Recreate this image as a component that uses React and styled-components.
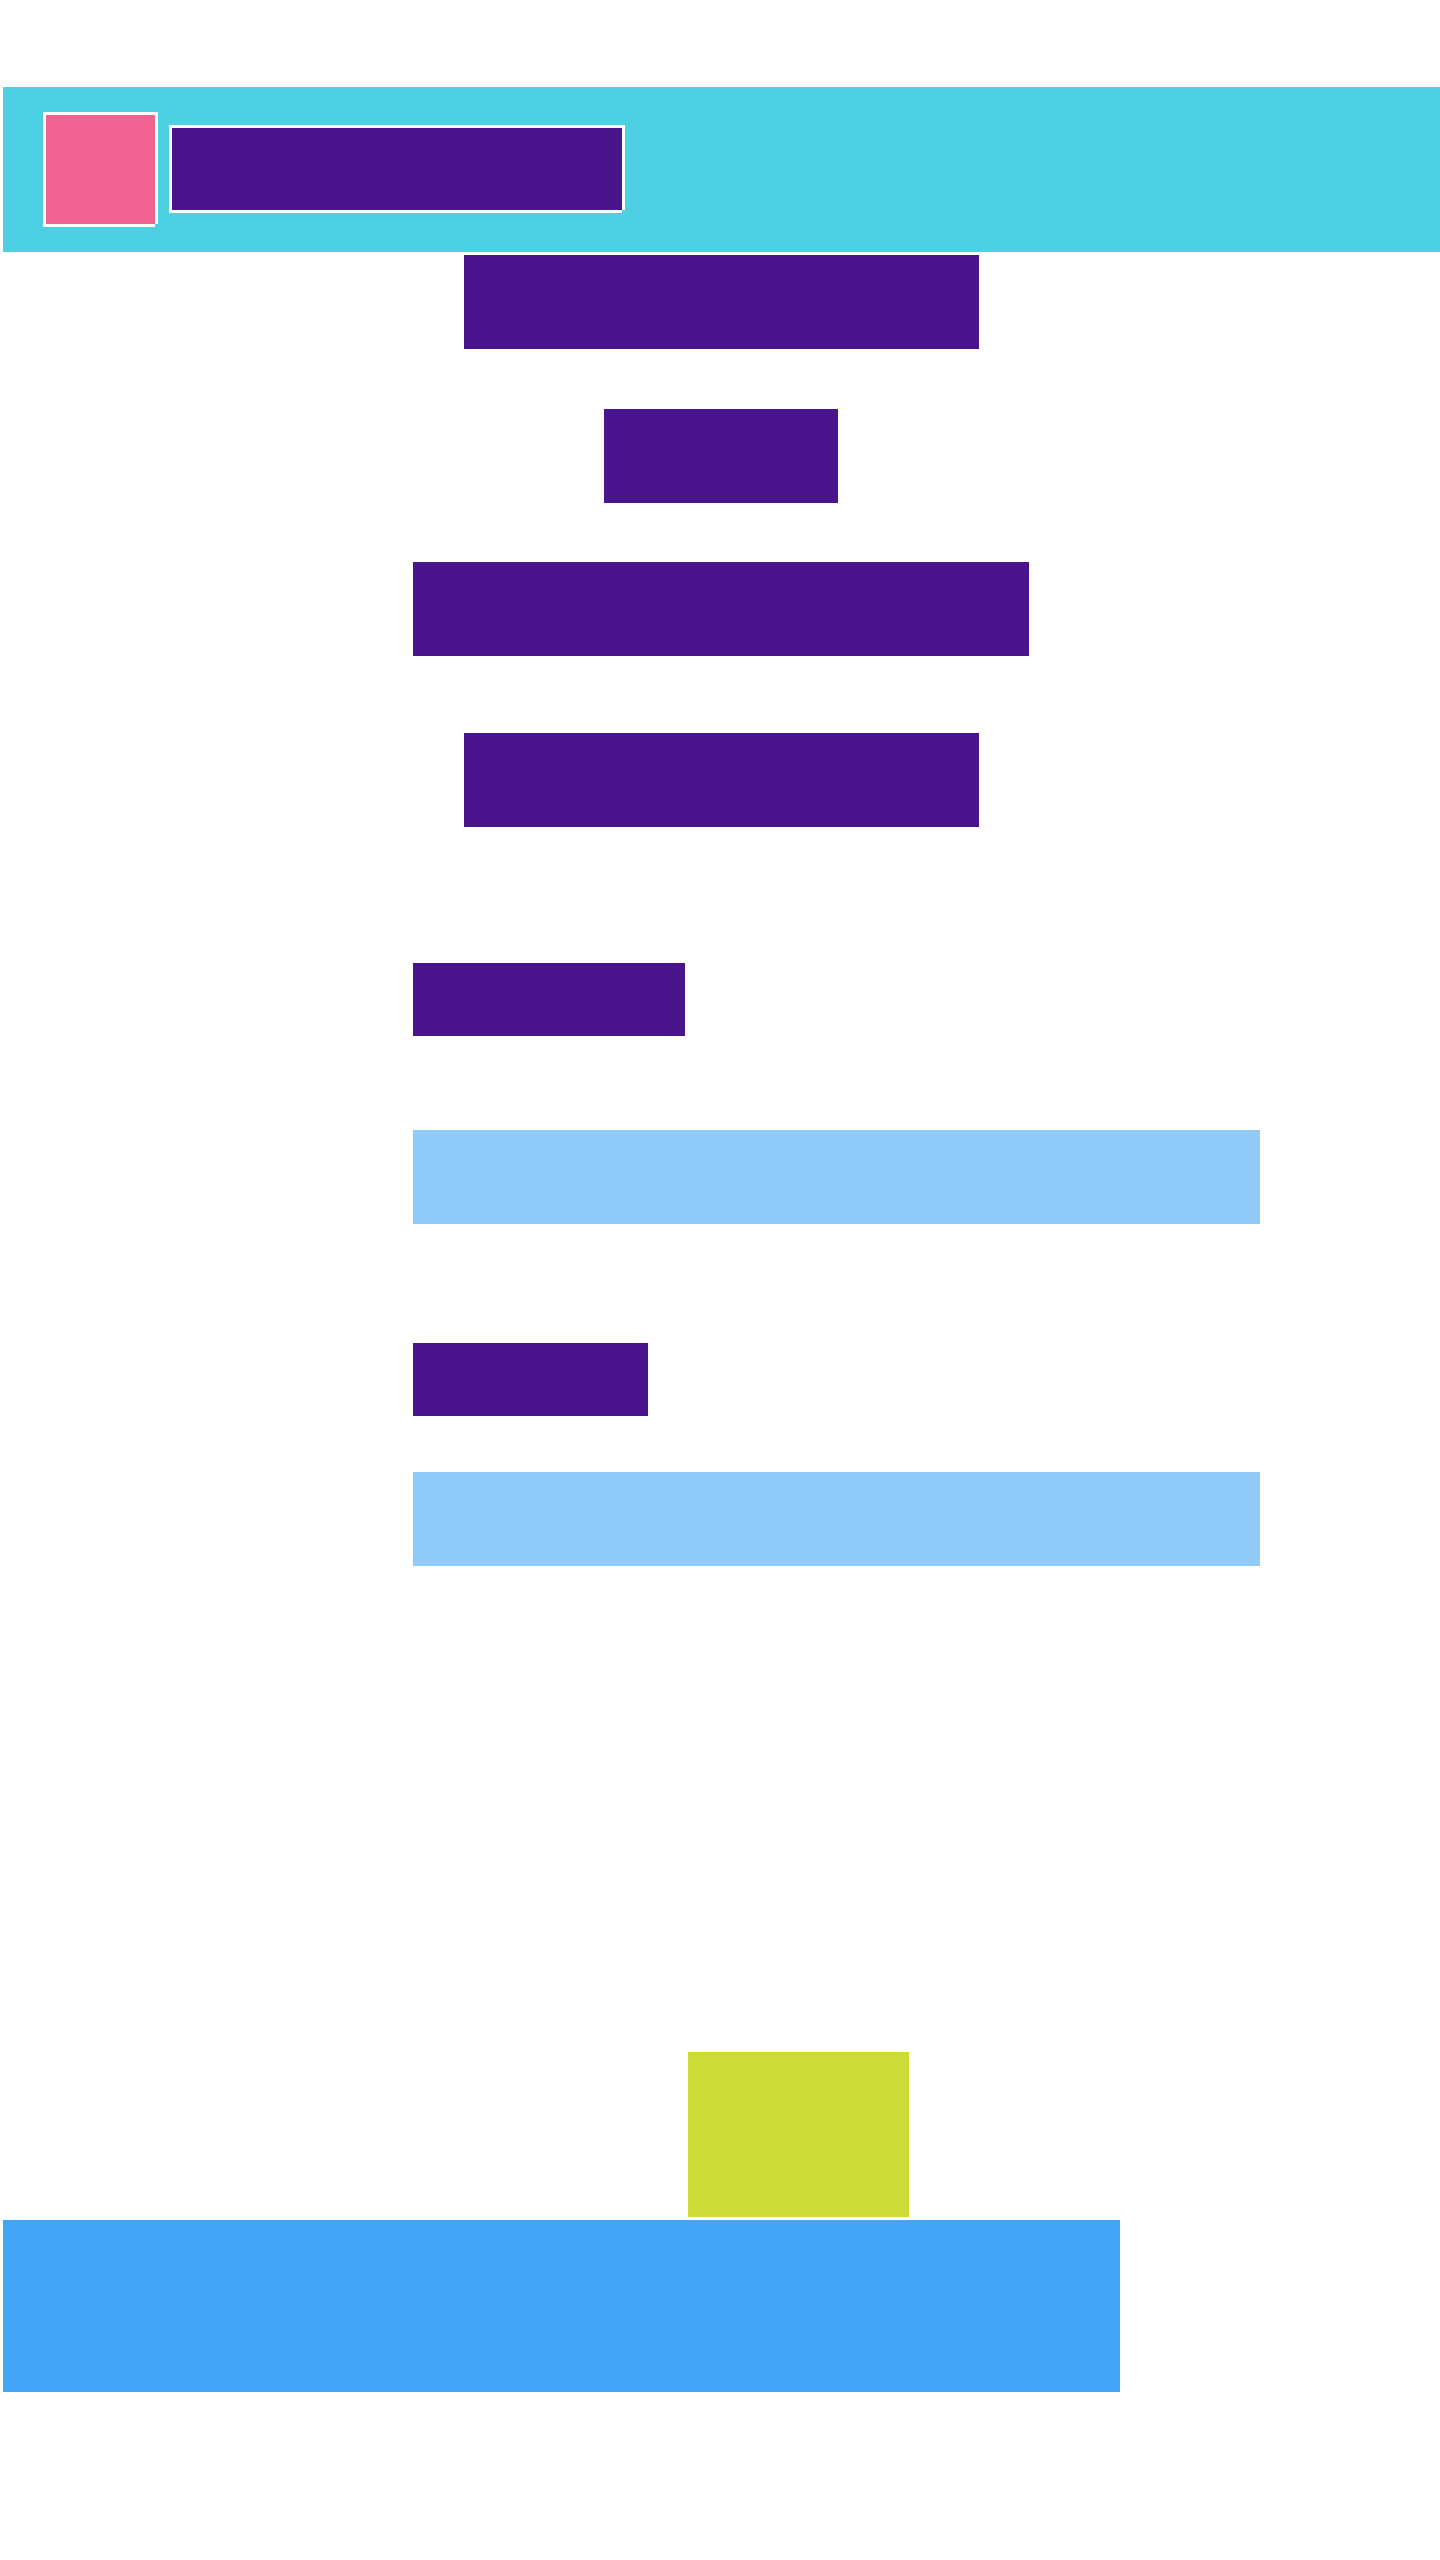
import React from "react";
import styled, { createGlobalStyle } from "styled-components";

const Global = createGlobalStyle`
  html, body { margin: 0; padding: 0; background: #fff; font-family: "Liberation Sans", Arial, sans-serif; }
  * { box-sizing: border-box; }
`;

const notch = `polygon(0 0, 100% 0, 100% calc(100% - 3px), calc(100% - 3px) calc(100% - 3px), calc(100% - 3px) 100%, 0 100%)`;

const Page = styled.div`
  padding: 87px 0 0 3px;
  min-height: 2560px;
  display: flex;
  flex-direction: column;
`;

const Header = styled.header`
  height: 165px;
  background: #4dd0e1;
  padding-left: 40px;
  display: flex;
  align-items: center;
  gap: 11px;
`;

const Logo = styled.div`
  width: 115px;
  height: 115px;
  background: #f06292;
  border: 3px solid #fff;
  clip-path: ${notch};
`;

const Brand = styled.h1`
  margin: 0 0 1px;
  width: 456px;
  height: 88px;
  background: #4a148c;
  border: 3px solid #fff;
  clip-path: ${notch};
`;

const Main = styled.main`
  margin: 3px 0 0 410px;
  display: flex;
  flex-direction: column;
  align-items: flex-start;
`;

const Intro = styled.section`
  width: 616px;
  display: flex;
  flex-direction: column;
  align-items: center;
`;

const Heading = styled.h2`
  margin: ${(p) => p.$top}px 0 0;
  width: ${(p) => p.$width}px;
  height: 94px;
  background: #4a148c;
`;

const Label = styled.label`
  display: block;
  margin-top: ${(p) => p.$top}px;
  width: ${(p) => p.$width}px;
  height: 73px;
  background: #4a148c;
`;

const Field = styled.div`
  margin-top: ${(p) => p.$top}px;
  width: 847px;
  height: 94px;
  background: #90caf9;
`;

const Footer = styled.footer`
  margin-top: 486px;
  display: flex;
  flex-direction: column;
  align-items: flex-start;
  gap: 3px;
`;

const Submit = styled.button`
  margin-left: 685px;
  width: 221px;
  height: 165px;
  padding: 0;
  border: 0;
  background: #cddc39;
`;

const Banner = styled.div`
  width: 1117px;
  height: 172px;
  background: #42a5f5;
`;

export default function App() {
  return (
    <>
      <Global />
      <Page>
        <Header>
          <Logo />
          <Brand />
        </Header>
        <Main>
          <Intro>
            <Heading $top={0} $width={515} />
            <Heading $top={60} $width={234} />
            <Heading $top={59} $width={616} />
            <Heading $top={77} $width={515} />
          </Intro>
          <Label $top={136} $width={272} />
          <Field $top={94} />
          <Label $top={119} $width={235} />
          <Field $top={56} />
        </Main>
        <Footer>
          <Submit />
          <Banner />
        </Footer>
      </Page>
    </>
  );
}
